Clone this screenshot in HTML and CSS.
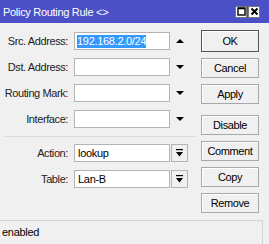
FILE: index.html
```html
<!DOCTYPE html>
<html lang="en">
<head>
    <meta charset="UTF-8">
    <title>Policy Routing Rule</title>
    <link rel="stylesheet" href="styles.css">
</head>
<body>
    <div class="window">
        <div class="titlebar">
            <span class="title">Policy Routing Rule &lt;&gt;</span>
            <div class="title-btns">
                <span class="tbtn">
                    <svg width="9" height="9" viewBox="0 0 9 9"><rect x="1" y="1" width="7" height="7" fill="none" stroke="#000" stroke-width="1.4"/><line x1="1" y1="1.5" x2="8" y2="1.5" stroke="#000" stroke-width="1.6"/></svg>
                </span>
                <span class="tbtn">
                    <svg width="9" height="9" viewBox="0 0 9 9"><path d="M1.5 1.5 L7.5 7.5 M7.5 1.5 L1.5 7.5" stroke="#000" stroke-width="2"/></svg>
                </span>
            </div>
        </div>

        <div class="content">
            <div class="form">
                <div class="row">
                    <label>Src. Address:</label>
                    <div class="field"><span class="sel">192.168.2.0/24</span></div>
                    <span class="arrow up"></span>
                </div>
                <div class="row">
                    <label>Dst. Address:</label>
                    <div class="field"></div>
                    <span class="arrow down"></span>
                </div>
                <div class="row">
                    <label>Routing Mark:</label>
                    <div class="field"></div>
                    <span class="arrow down"></span>
                </div>
                <div class="row">
                    <label>Interface:</label>
                    <div class="field"></div>
                    <span class="arrow down"></span>
                </div>

                <div class="sep"></div>

                <div class="row">
                    <label>Action:</label>
                    <div class="field">lookup</div>
                    <span class="dd"><svg width="7" height="8" viewBox="0 0 7 8"><rect x="0" y="0" width="7" height="1.2" fill="#000"/><path d="M0 3 L7 3 L3.5 7.5 Z" fill="#000"/></svg></span>
                </div>
                <div class="row">
                    <label>Table:</label>
                    <div class="field">Lan-B</div>
                    <span class="dd"><svg width="7" height="8" viewBox="0 0 7 8"><rect x="0" y="0" width="7" height="1.2" fill="#000"/><path d="M0 3 L7 3 L3.5 7.5 Z" fill="#000"/></svg></span>
                </div>
            </div>

            <div class="buttons">
                <button class="btn default">OK</button>
                <button class="btn">Cancel</button>
                <button class="btn">Apply</button>
                <button class="btn gap">Disable</button>
                <button class="btn">Comment</button>
                <button class="btn">Copy</button>
                <button class="btn">Remove</button>
            </div>
        </div>

        <div class="status">
            <span class="status-cell">enabled</span>
        </div>
    </div>
</body>
</html>
```

FILE: styles.css
```css
body {
    margin: 0;
    background: #f0f0f0;
    font-family: "Liberation Sans", Arial, sans-serif;
    font-size: 11px;
    color: #000;
}

.window {
    width: 269px;
    height: 244px;
    display: flex;
    flex-direction: column;
    overflow: hidden;
}

.titlebar {
    height: 23px;
    background: #4b50c6;
    display: flex;
    align-items: center;
    justify-content: space-between;
    padding: 0 9px 0 3px;
}

.title {
    color: #fff;
    font-size: 11px;
    letter-spacing: -0.3px;
}

.title-btns {
    display: flex;
    gap: 1px;
}

.tbtn {
    width: 10px;
    height: 10px;
    background: #fff;
    border: 1px solid #777;
    display: flex;
    align-items: center;
    justify-content: center;
}

.content {
    flex: 1;
    display: flex;
}

.form {
    width: 195px;
    padding-top: 9px;
    display: flex;
    flex-direction: column;
    gap: 8px;
}

.row {
    display: flex;
    align-items: center;
    height: 18px;
}

.row label {
    width: 68px;
    text-align: right;
    padding-right: 6px;
    letter-spacing: -0.4px;
    color: #222;
}

.field {
    width: 91px;
    height: 16px;
    background: #fff;
    border: 1px solid #b4b4b4;
    padding-left: 3px;
    line-height: 16px;
    letter-spacing: -0.3px;
}

.sel {
    background: #3399ff;
    color: #fff;
    display: inline-block;
    height: 13px;
    line-height: 13px;
    margin-left: -1px;
}

.arrow {
    width: 0;
    height: 0;
    margin-left: 6px;
    border-left: 4px solid transparent;
    border-right: 4px solid transparent;
}

.arrow.up {
    border-bottom: 4px solid #000;
}

.arrow.down {
    border-top: 4px solid #000;
}

.dd {
    width: 15px;
    height: 16px;
    margin-left: 1px;
    background: #f0f0f0;
    border: 1px solid #b4b4b4;
    display: flex;
    align-items: center;
    justify-content: center;
}

.sep {
    height: 1px;
    background: #d8d8d8;
    margin: 0 0 -1px 5px;
}

.buttons {
    padding-top: 7px;
    padding-left: 6px;
    display: flex;
    flex-direction: column;
    gap: 6px;
}

.btn {
    width: 58px;
    height: 20px;
    padding: 0;
    font-family: "Liberation Sans", Arial, sans-serif;
    font-size: 11px;
    letter-spacing: -0.4px;
    color: #000;
    background: #f0f0f0;
    border: 1px solid #a8a8a8;
    box-shadow: inset 1px 1px #fff;
}

.btn.default {
    height: 22px;
    border: 1px solid #555;
}

.btn.gap {
    margin-top: 5px;
}

.status {
    height: 23px;
    display: flex;
    border-top: 1px solid #d4d4d4;
    margin-right: 6px;
}

.status-cell {
    flex: 1;
    padding-left: 2px;
    line-height: 22px;
    border-right: 1px solid #d4d4d4;
    letter-spacing: -0.3px;
}
```
